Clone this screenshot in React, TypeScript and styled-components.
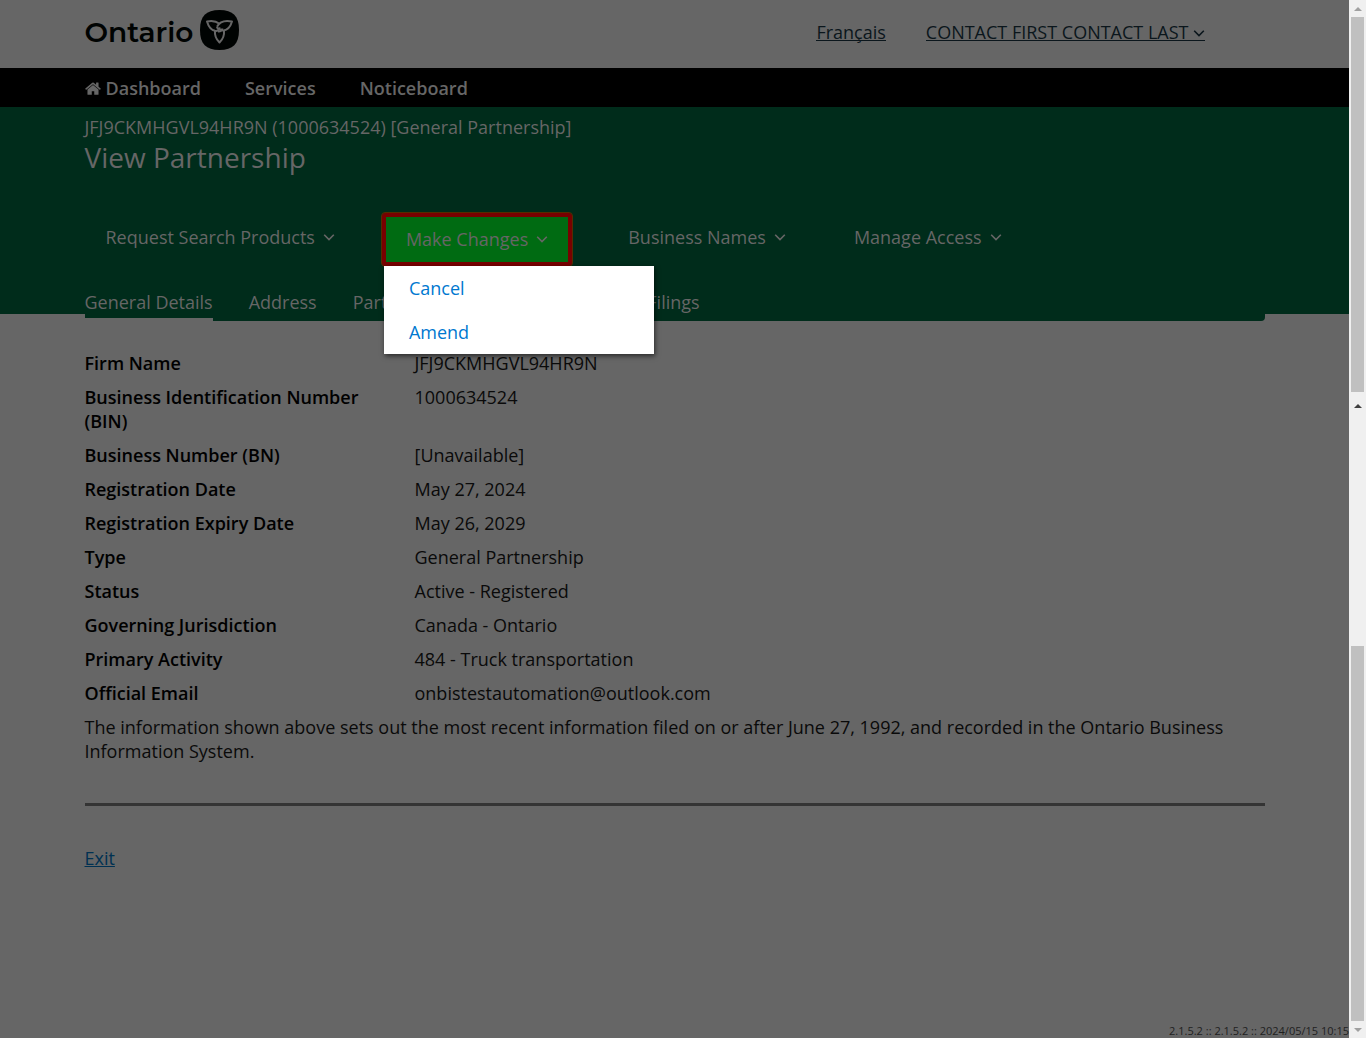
import React from "react";
import styled, { createGlobalStyle, css } from "styled-components";

const GlobalStyle = createGlobalStyle`
  *, *::before, *::after { box-sizing: border-box; }
  body {
    margin: 0;
    background: #666;
    color: #0a0a0a;
    font-family: "Open Sans", "Noto Sans", sans-serif;
    font-size: 18px;
    line-height: 24px;
  }
  button { font: inherit; }
`;

const Shell = styled.div`
  display: flex;
  min-height: 100vh;
`;

const Page = styled.div`
  flex: 1;
  min-width: 0;
  display: flex;
  flex-direction: column;
`;

const Container = styled.div`
  width: 100%;
  max-width: 1180px;
  margin: 0 auto;
`;

const Header = styled.header`
  height: 68px;
`;

const HeaderRow = styled(Container)`
  display: flex;
  align-items: flex-start;
  justify-content: space-between;
  padding-right: 60px;
`;

const Brand = styled.a`
  display: flex;
  align-items: flex-start;
  gap: 7px;
  padding-top: 10px;
  color: #000302;
  font-family: "Montserrat", "Lato", sans-serif;
  font-size: 28px;
  font-weight: 600;
  line-height: 44px;
  text-decoration: none;
`;

const HeaderLinks = styled.nav`
  display: flex;
  gap: 40px;
  padding-top: 20px;
`;

const HeaderLink = styled.a`
  display: flex;
  gap: 4px;
  height: 21px;
  border-bottom: 1px solid #0b161c;
  color: #0b161c;
  text-decoration: none;
  svg { margin-top: 9px; }
`;

const MainNav = styled.nav`
  background: #000;
`;

const MainNavRow = styled(Container)`
  display: flex;
  gap: 44px;
  padding: 8px 0 7px;
`;

const MainNavLink = styled.a`
  display: inline-flex;
  align-items: center;
  gap: 5px;
  color: #666;
  font-weight: 600;
  text-decoration: none;
`;

const Banner = styled.section`
  height: 207px;
  background: #002c1b;
  color: #666;
`;

const BannerInner = styled(Container)`
  padding-top: 8px;
`;

const EntityName = styled.p`
  margin: 0;
`;

const Title = styled.h1`
  margin: 0;
  font-size: 28px;
  font-weight: 400;
  line-height: 36px;
`;

const ActionBar = styled.div`
  display: flex;
  align-items: flex-start;
  gap: 26px;
  padding-top: 28px;
`;

const ActionItem = styled.div`
  position: relative;
`;

const ActionButton = styled.button<{ $active?: boolean }>`
  display: flex;
  align-items: center;
  gap: 8px;
  height: 50px;
  padding: 0 21px;
  margin-top: 9px;
  border: 0;
  background: none;
  color: #666;
  white-space: nowrap;
  ${(p) =>
    p.$active &&
    css`
      height: 53px;
      margin: 10px 9px 0 0;
      padding: 0 20px 1px;
      border: 4px solid #780000;
      outline: 1px solid #572b00;
      border-radius: 3px;
      background: #006b12;
    `}
`;

const Menu = styled.ul`
  position: absolute;
  z-index: 2;
  top: 63px;
  left: 2px;
  width: 270px;
  margin: 0;
  padding: 0;
  background: #fff;
  box-shadow: 1px 2px 5px rgba(0, 0, 0, 0.6);
  list-style: none;
`;

const MenuLink = styled.a`
  display: block;
  padding: 10px 25px;
  color: #0078d0;
  text-decoration: none;
`;

const Tabs = styled.nav`
  display: flex;
  gap: 36px;
  height: 37px;
  margin-top: 18px;
  border-radius: 0 0 4px 0;
  background: #002c1b;
`;

const Tab = styled.a<{ $selected?: boolean }>`
  padding-top: 6px;
  border-bottom: 3px solid ${(p) => (p.$selected ? "#666" : "transparent")};
  color: #666;
  text-decoration: none;
`;

const FilingsTab = styled(Tab)`
  margin-left: 224px;
`;

const Content = styled.main`
  flex: 1;
`;

const Details = styled.dl`
  display: grid;
  grid-template-columns: 330px 1fr;
  row-gap: 10px;
  margin: 0;
  padding-top: 37px;
`;

const Label = styled.dt`
  padding-right: 30px;
  color: #000;
  font-weight: 600;
`;

const Value = styled.dd`
  margin: 0;
`;

const Note = styled.p`
  margin: 10px 0 40px;
`;

const Rule = styled.hr`
  height: 3px;
  margin: 0 0 40px;
  border: 0;
  background: #343434;
`;

const ExitLink = styled.a`
  color: #003152;
  text-decoration: underline;
`;

const Version = styled.footer`
  color: #1f1f1f;
  font-size: 11px;
  line-height: 14px;
  text-align: right;
`;

const ScrollRail = styled.aside`
  display: flex;
  flex: 0 0 17px;
  flex-direction: column;
  background: #f0f0f0;
`;

const Thumb = styled.div`
  height: 375px;
  margin: 0 2px;
  background: #c0c0c0;
`;

const RailArrow = styled.div<{ $down?: boolean; $dark?: boolean }>`
  display: grid;
  place-items: center;
  height: 17px;
  color: ${(p) => (p.$dark ? "#404040" : "#a0a0a0")};
  svg { transform: ${(p) => (p.$down ? "rotate(180deg)" : "none")}; }
`;

const RailGap = styled.div<{ $size?: number }>`
  flex: ${(p) => (p.$size ? `0 0 ${p.$size}px` : "1")};
`;

const ChevronSvg = styled.svg`
  flex: none;
  width: 12px;
  height: 8px;
`;

const Chevron = () => (
  <ChevronSvg viewBox="0 0 12 8" fill="none" stroke="currentColor" strokeWidth="1.6" aria-hidden="true">
    <path d="M1.2 1.7 6 6.5l4.800-4.800" />
  </ChevronSvg>
);

const Arrow = () => (
  <svg width="8" height="4" viewBox="0 0 8 4" aria-hidden="true">
    <path d="M0 4 4 0l4 4z" fill="currentColor" />
  </svg>
);

const HomeIcon = () => (
  <svg width="16" height="13" viewBox="64 200 1664 1352" aria-hidden="true">
    <path
      fill="currentColor"
      d="M1472 992v480q0 26-19 45t-45 19h-384v-384h-256v384h-384q-26 0-45-19t-19-45v-480q0-1 .5-3t.5-3l575-474 575 474q1 2 1 6zm223-69l-62 74q-8 9-21 11h-3q-13 0-21-7l-692-577-692 577q-12 8-24 7-13-2-21-11l-62-74q-8-10-7-23.500t11-21.500l719-599q32-26 76-26t76 26l244 204v-195q0-14 9-23t23-9h192q14 0 23 9t9 23v408l219 182q10 8 11 21.500t-7 23.500z"
    />
  </svg>
);

const Trillium = () => (
  <svg width="39" height="40" viewBox="0 0 39 40" aria-hidden="true">
    <path
      d="M19.500 0C33 0 39 6 39 20s-6 20-19.500 20S0 34 0 20 6 0 19.500 0z"
      fill="#000302"
    />
    <g fill="none" stroke="#666" strokeWidth="2" strokeLinejoin="round">
      <path d="M19.500 13.800C16 11 12 10.300 7 11.500c1.500 5 4 8.500 8 9.300 2.700.4 4.300-.8 4.600-3.500" />
      <path d="M17 16.800c2.500-4.800 8-6.800 15-5.300-1.500 5-4.500 8.500-8.500 9-2.200.2-3.700-.7-4.700-2.200" />
      <path d="M15 20.800c-.5 4.600 1 8.200 4.500 11.700 3.500-3.500 5-7.100 4.500-11.700" />
      <path d="M18 21.500c2.300.2 3.900-.8 4.500-3M17 16.800c.2 1.200.9 2 2 2.600" />
    </g>
  </svg>
);

const details: [string, string][] = [
  ["Firm Name", "JFJ9CKMHGVL94HR9N"],
  ["Business Identification Number (BIN)", "1000634524"],
  ["Business Number (BN)", "[Unavailable]"],
  ["Registration Date", "May 27, 2024"],
  ["Registration Expiry Date", "May 26, 2029"],
  ["Type", "General Partnership"],
  ["Status", "Active - Registered"],
  ["Governing Jurisdiction", "Canada - Ontario"],
  ["Primary Activity", "484 - Truck transportation"],
  ["Official Email", "onbistestautomation@outlook.com"],
];

export default function App() {
  return (
    <>
      <GlobalStyle />
      <Shell>
        <Page>
          <Header>
            <HeaderRow>
              <Brand href="#">
                Ontario
                <Trillium />
              </Brand>
              <HeaderLinks>
                <HeaderLink href="#">Français</HeaderLink>
                <HeaderLink href="#">
                  CONTACT FIRST CONTACT LAST
                  <Chevron />
                </HeaderLink>
              </HeaderLinks>
            </HeaderRow>
          </Header>
          <MainNav>
            <MainNavRow>
              <MainNavLink href="#">
                <HomeIcon />
                Dashboard
              </MainNavLink>
              <MainNavLink href="#">Services</MainNavLink>
              <MainNavLink href="#">Noticeboard</MainNavLink>
            </MainNavRow>
          </MainNav>
          <Banner>
            <BannerInner>
              <EntityName>JFJ9CKMHGVL94HR9N (1000634524) [General Partnership]</EntityName>
              <Title>View Partnership</Title>
              <ActionBar>
                <ActionItem>
                  <ActionButton type="button">Request Search Products <Chevron /></ActionButton>
                </ActionItem>
                <ActionItem>
                  <ActionButton type="button" $active aria-expanded="true">Make Changes <Chevron /></ActionButton>
                  <Menu>
                    <li><MenuLink href="#">Cancel</MenuLink></li>
                    <li><MenuLink href="#">Amend</MenuLink></li>
                  </Menu>
                </ActionItem>
                <ActionItem>
                  <ActionButton type="button">Business Names <Chevron /></ActionButton>
                </ActionItem>
                <ActionItem>
                  <ActionButton type="button">Manage Access <Chevron /></ActionButton>
                </ActionItem>
              </ActionBar>
              <Tabs>
                <Tab href="#" $selected>General Details</Tab>
                <Tab href="#">Address</Tab>
                <Tab href="#">Part</Tab>
                <FilingsTab href="#">Filings</FilingsTab>
              </Tabs>
            </BannerInner>
          </Banner>
          <Content>
            <Container>
              <Details>
                {details.map(([label, value]) => (
                  <React.Fragment key={label}>
                    <Label>{label}</Label>
                    <Value>{value}</Value>
                  </React.Fragment>
                ))}
              </Details>
              <Note>
                The information shown above sets out the most recent information filed on or after June 27, 1992, and
                recorded in the Ontario Business Information System.
              </Note>
              <Rule />
              <ExitLink href="#">Exit</ExitLink>
            </Container>
          </Content>
          <Version>2.1.5.2 :: 2.1.5.2 :: 2024/05/15 10:15</Version>
        </Page>
        <ScrollRail aria-hidden="true">
          <RailArrow><Arrow /></RailArrow>
          <Thumb />
          <RailGap $size={5} />
          <RailArrow $dark><Arrow /></RailArrow>
          <RailGap />
          <Thumb />
          <RailArrow $down><Arrow /></RailArrow>
        </ScrollRail>
      </Shell>
    </>
  );
}
